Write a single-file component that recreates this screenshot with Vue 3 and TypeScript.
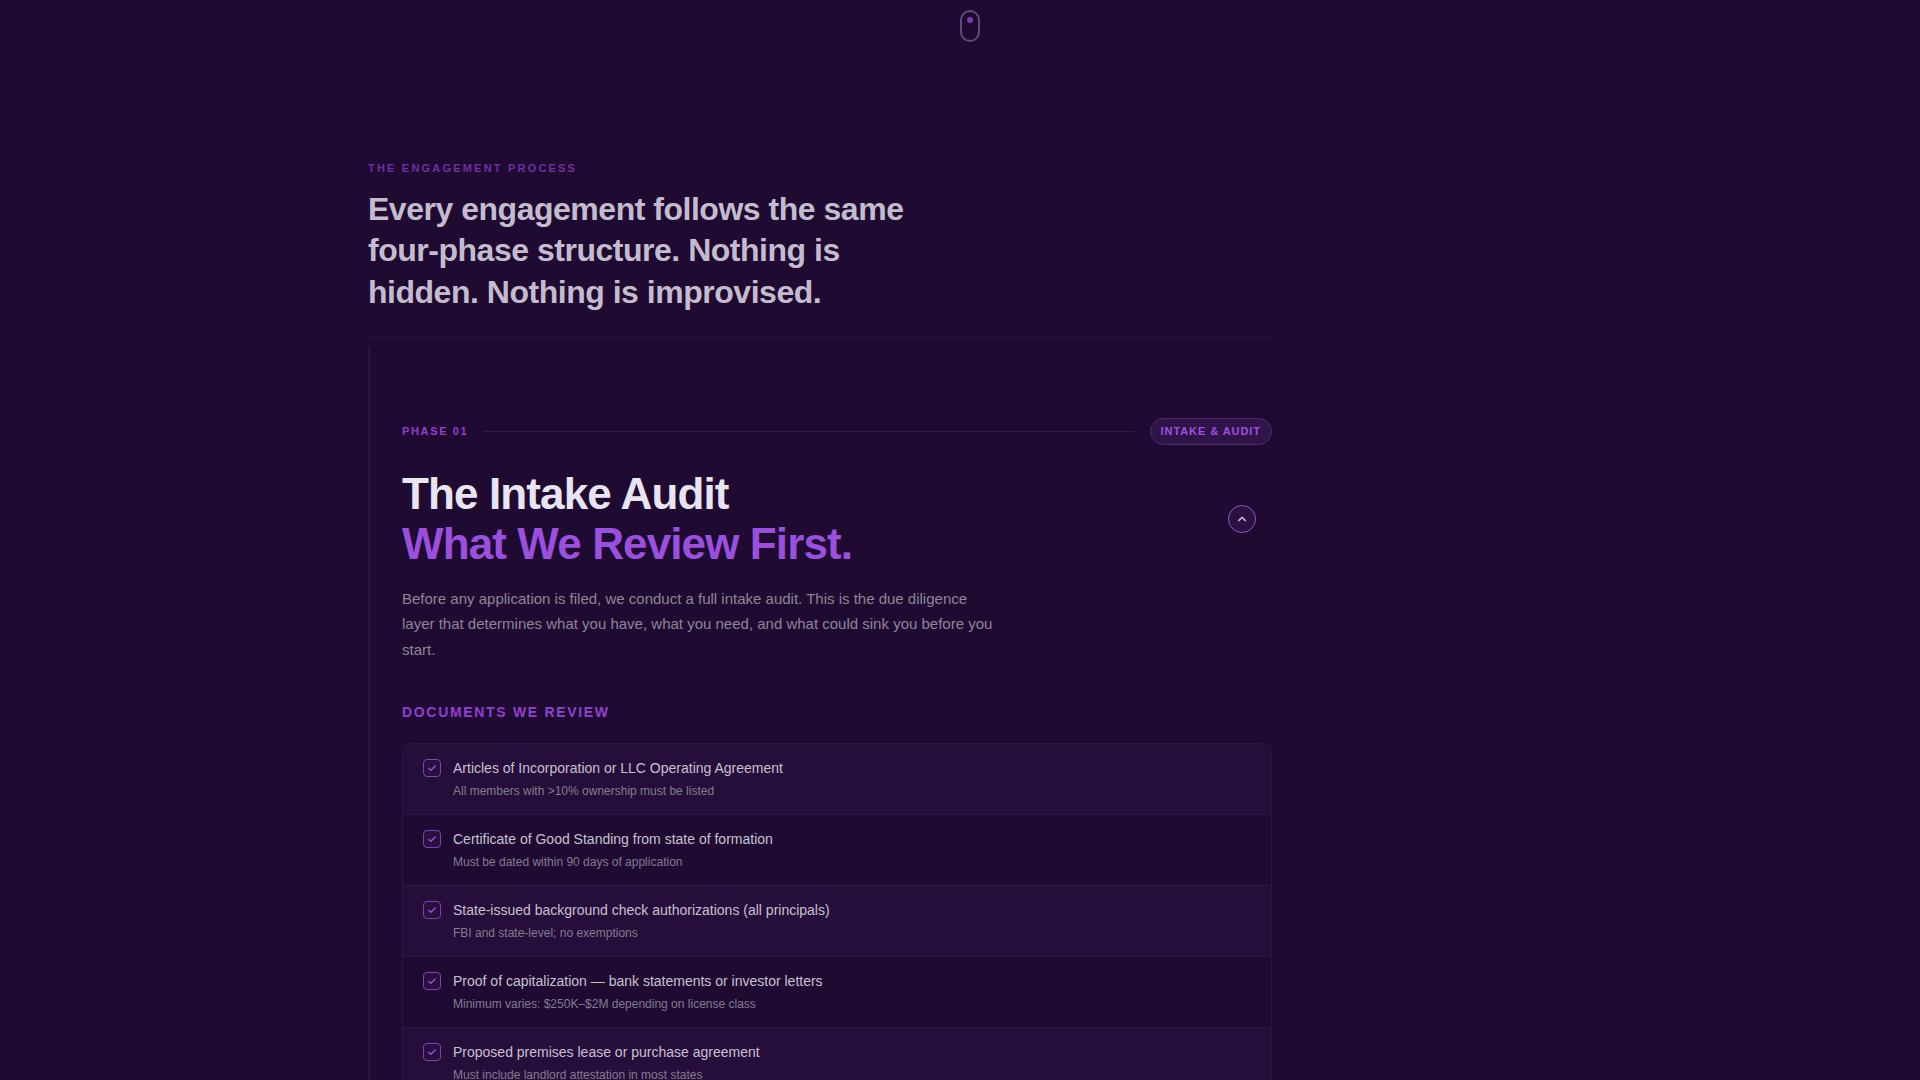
<script setup lang="ts">
interface Doc {
  title: string
  note: string
}

const docs: Doc[] = [
  { title: 'Articles of Incorporation or LLC Operating Agreement', note: 'All members with >10% ownership must be listed' },
  { title: 'Certificate of Good Standing from state of formation', note: 'Must be dated within 90 days of application' },
  { title: 'State-issued background check authorizations (all principals)', note: 'FBI and state-level; no exemptions' },
  { title: 'Proof of capitalization — bank statements or investor letters', note: 'Minimum varies: $250K–$2M depending on license class' },
  { title: 'Proposed premises lease or purchase agreement', note: 'Must include landlord attestation in most states' }
]
</script>

<template>
  <div class="page">
    <!-- scroll hint -->
    <div class="mouse"><span class="mouse-dot"></span></div>

    <main class="process">
      <header class="process-head">
        <p class="eyebrow">THE ENGAGEMENT PROCESS</p>
        <h2 class="lead">Every engagement follows the same four-phase structure. Nothing is hidden. Nothing is improvised.</h2>
      </header>

      <section class="phase">
        <div class="phase-top">
          <span class="phase-num">PHASE 01</span>
          <span class="phase-rule"></span>
          <span class="phase-badge">INTAKE &amp; AUDIT</span>
        </div>

        <div class="phase-title-row">
          <h1 class="phase-title">The Intake Audit<br /><em>What We Review First.</em></h1>
          <button class="collapse" type="button" aria-label="Collapse">
            <svg width="12" height="12" viewBox="0 0 12 12" fill="none">
              <path d="M2.6 7.6 6 4.4l3.4 3.2" stroke="#d0a8ee" stroke-width="1.5" stroke-linecap="round" stroke-linejoin="round" />
            </svg>
          </button>
        </div>

        <p class="phase-desc">
          Before any application is filed, we conduct a full intake audit. This is the due diligence layer that determines what you have, what you need, and what could sink you before you start.
        </p>

        <h3 class="docs-label">DOCUMENTS WE REVIEW</h3>

        <ul class="docs">
          <li v-for="doc in docs" :key="doc.title" class="doc">
            <span class="doc-check">
              <svg width="10" height="10" viewBox="0 0 10 10" fill="none">
                <path d="M1.8 5.4 3.9 7.3 8.2 2.9" stroke="#9b4fde" stroke-width="1.4" stroke-linecap="round" stroke-linejoin="round" />
              </svg>
            </span>
            <div class="doc-text">
              <div class="doc-title">{{ doc.title }}</div>
              <div class="doc-note">{{ doc.note }}</div>
            </div>
          </li>
        </ul>
      </section>
    </main>
  </div>
</template>

<style>
html,
body {
  margin: 0;
  background: #1f0b32;
}
</style>

<style scoped>
.page {
  position: relative;
  height: 1080px;
  overflow: hidden;
  background: #1f0b32;
  font-family: 'Liberation Sans', Arial, sans-serif;
}

.mouse {
  position: absolute;
  top: 10px;
  left: 960px;
  width: 20px;
  height: 32px;
  box-sizing: border-box;
  border: 2px solid #5f4a78;
  border-radius: 10px;
}

.mouse-dot {
  position: absolute;
  top: 5px;
  left: 5px;
  width: 6px;
  height: 6px;
  border-radius: 50%;
  background: #7a3db5;
}

.process {
  width: 904px;
  margin-left: 368px;
  padding-top: 161px;
}

.process-head {
  padding-bottom: 23.4px;
  border-bottom: 1px solid #28143b;
}

.eyebrow {
  margin: 0 0 13.6px;
  font-size: 11px;
  line-height: 14px;
  font-weight: 700;
  letter-spacing: 0.2em;
  color: #6f2fa5;
}

.lead {
  margin: 0;
  max-width: 560px;
  font-size: 32px;
  line-height: 41.6px;
  font-weight: 700;
  letter-spacing: -0.015em;
  color: #c4bcce;
}

.phase {
  margin-top: 8px;
  padding: 72px 0 0 32px;
  border-left: 2px solid #2a1440;
}

.phase-top {
  display: flex;
  align-items: center;
  gap: 16px;
}

.phase-num {
  font-size: 11px;
  font-weight: 700;
  letter-spacing: 0.15em;
  color: #9040d0;
}

.phase-rule {
  flex: 1;
  height: 1px;
  background: #301a46;
}

.phase-badge {
  box-sizing: border-box;
  height: 27px;
  padding: 0 10px;
  display: flex;
  align-items: center;
  font-size: 11px;
  font-weight: 700;
  letter-spacing: 0.085em;
  color: #9f50e0;
  background: #2f1448;
  border: 1px solid #4c2a6e;
  border-radius: 14px;
}

.phase-title-row {
  display: flex;
  justify-content: space-between;
  align-items: center;
  margin-top: 24px;
  padding-right: 16px;
}

.phase-title {
  margin: 0;
  font-size: 44px;
  line-height: 50px;
  font-weight: 700;
  letter-spacing: -0.02em;
  color: #e8e4f0;
}

.phase-title em {
  font-style: normal;
  color: #9b4fde;
}

.collapse {
  width: 28px;
  height: 28px;
  padding: 0;
  display: flex;
  align-items: center;
  justify-content: center;
  background: #2a1140;
  border: 1px solid #8d55bf;
  border-radius: 50%;
}

.phase-desc {
  margin: 17px 0 0;
  max-width: 600px;
  font-size: 15px;
  line-height: 25.5px;
  color: #8f8499;
}

.docs-label {
  margin: 41px 0 0;
  font-size: 14px;
  line-height: 18px;
  font-weight: 700;
  letter-spacing: 0.12em;
  color: #9040d0;
}

.docs {
  margin: 22px 0 0;
  padding: 0;
  list-style: none;
  border: 1px solid #2b1640;
  border-bottom: none;
  border-radius: 10px 10px 0 0;
  overflow: hidden;
}

.doc {
  box-sizing: border-box;
  height: 71px;
  display: flex;
  gap: 12px;
  padding: 14px 20px 0;
  border-bottom: 1px solid #2b1640;
  background: #1f0b32;
}

.doc:nth-child(odd) {
  background: #260e3a;
}

.doc-check {
  flex: none;
  width: 18px;
  height: 18px;
  margin-top: 1px;
  box-sizing: border-box;
  display: flex;
  align-items: center;
  justify-content: center;
  border: 1px solid #7d3fb5;
  border-radius: 4px;
  background: #29103f;
}

.doc-title {
  font-size: 14px;
  line-height: 20px;
  color: #c8c0d2;
}

.doc-note {
  margin-top: 4px;
  font-size: 12px;
  line-height: 18px;
  color: #857a90;
}
</style>
